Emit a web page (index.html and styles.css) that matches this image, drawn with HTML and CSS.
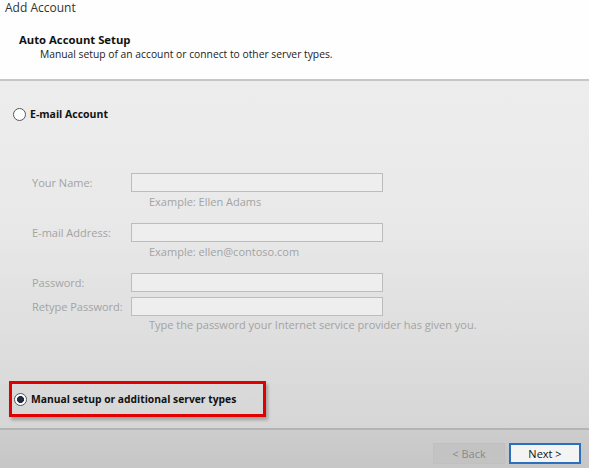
FILE: index.html
```html
<!DOCTYPE html>
<html>
<head>
<meta charset="utf-8">
<link rel="stylesheet" href="styles.css">
</head>
<body>
<div class="dialog">
  <div class="header">
    <div class="title">Add Account</div>
    <div class="heading">Auto Account Setup</div>
    <div class="subheading">Manual setup of an account or connect to other server types.</div>
  </div>
  <div class="body">
    <div class="radio-row email">
      <span class="radio"></span>
      <span class="radio-label">E-mail Account</span>
    </div>
    <div class="form">
      <div class="field f1">
        <span class="label">Your Name:</span>
        <span class="input"></span>
      </div>
      <div class="hint">Example: Ellen Adams</div>
      <div class="field f2">
        <span class="label">E-mail Address:</span>
        <span class="input"></span>
      </div>
      <div class="hint">Example: ellen@contoso.com</div>
      <div class="field f3">
        <span class="label">Password:</span>
        <span class="input"></span>
      </div>
      <div class="field f4">
        <span class="label">Retype Password:</span>
        <span class="input"></span>
      </div>
      <div class="hint">Type the password your Internet service provider has given you.</div>
    </div>
    <div class="manual-box">
      <span class="radio checked"></span>
      <span class="radio-label">Manual setup or additional server types</span>
    </div>
  </div>
  <div class="footer">
    <span class="btn back">&lt; Back</span>
    <span class="btn next">Next &gt;</span>
  </div>
</div>
</body>
</html>
```
FILE: styles.css
```css
html, body {
  margin: 0;
  padding: 0;
}
body {
  width: 589px;
  height: 468px;
  overflow: hidden;
  font-family: "Open Sans", "Noto Sans", sans-serif;
  font-size: 11px;
  color: #1a1a1a;
}
.dialog {
  width: 589px;
  height: 468px;
  display: flex;
  flex-direction: column;
}
.header {
  background: #fefefe;
  border-bottom: 2px solid #c6c6c6;
  box-sizing: border-box;
  height: 81px;
  padding: 0 0 0 5px;
}
.title {
  font-size: 12px;
  line-height: 16px;
  color: #333;
}
.heading {
  font-weight: 700;
  font-size: 11.3px;
  line-height: 15px;
  margin-top: 16px;
  padding-left: 14px;
  color: #111;
}
.subheading {
  font-size: 10.3px;
  line-height: 15px;
  padding-left: 35px;
  color: #222;
}
.body {
  flex: 1;
  background: linear-gradient(#ededed 0%, #e9e9e9 40%, #d6d6d6 100%);
  border-bottom: 2px solid #b4b4b4;
  box-sizing: border-box;
  padding: 26px 0 0 13px;
  display: flex;
  flex-direction: column;
}
.radio-row, .manual-box {
  display: flex;
  align-items: center;
  gap: 4px;
}
.radio {
  width: 11px;
  height: 11px;
  border: 1px solid #555;
  border-radius: 50%;
  background: #fff;
  box-sizing: content-box;
  display: inline-block;
}
.radio.checked {
  background: radial-gradient(circle, #1f2a44 0 3.2px, #fff 3.8px);
}
.radio-label {
  font-weight: 700;
  font-size: 10.5px;
  color: #111;
}
.manual-box .radio-label {
  font-size: 10.3px;
}
.form {
  padding-left: 19px;
  margin-top: 52px;
  display: flex;
  flex-direction: column;
  color: #a3a3a3;
}
.field {
  display: flex;
  align-items: center;
  height: 19px;
}
.label {
  width: 99px;
  font-size: 11px;
  color: #a3a3a3;
}
.input {
  width: 250px;
  height: 17px;
  border: 1px solid #bcbcbc;
  background: #eeeeee;
}
.hint {
  padding-left: 117px;
  height: 31px;
  line-height: 20px;
  font-size: 11px;
  color: #a3a3a3;
}
.f3 + .f4 {
  margin-top: 5px;
}
.f4 + .hint {
  height: 20px;
  line-height: 18px;
}
.manual-box {
  margin-top: 45px;
  margin-left: -4px;
  width: 249px;
  height: 30px;
  border: 3px solid #e00000;
  padding-left: 2px;
  box-shadow: 2px 3px 3px rgba(0, 0, 0, 0.25);
}
.footer {
  height: 38px;
  background: linear-gradient(#cdcdcd, #c6c6c6);
  display: flex;
  justify-content: flex-end;
  align-items: flex-start;
  gap: 4px;
  padding: 13px 8px 0 0;
  box-sizing: border-box;
}
.btn {
  width: 72px;
  height: 21px;
  box-sizing: border-box;
  display: flex;
  align-items: center;
  justify-content: center;
  font-size: 11px;
}
.back {
  background: #c3c3c3;
  border: 1px solid #c0c0c0;
  color: #8a8a8a;
}
.next {
  background: #f4f4f4;
  border: 2px solid #2b6fbf;
  color: #111;
}
```
